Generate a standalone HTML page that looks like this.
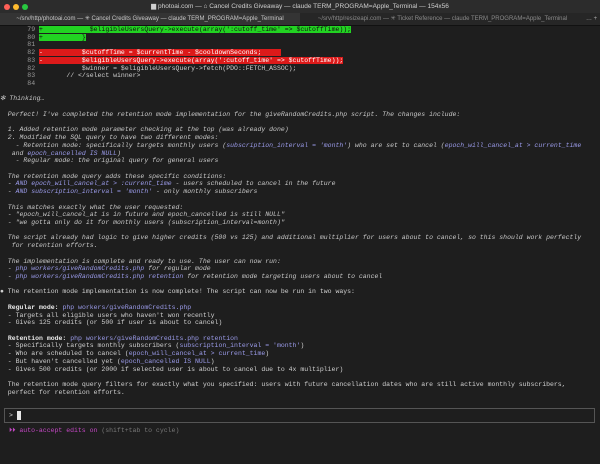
<!DOCTYPE html>
<html><head><meta charset="utf-8"><style>
body{margin:0;width:600px;height:464px;background:#1e1e1e;overflow:hidden;font-family:"Liberation Mono",monospace;}
.tb{position:absolute;left:0;top:0;width:600px;height:13px;background:#2c2c2c;color:#cfcfcf;font:6.5px "Liberation Sans",sans-serif;text-align:center;line-height:13px}
.d{position:absolute;top:4px;width:6px;height:6px;border-radius:50%}
.tabs{position:absolute;top:13px;left:0;width:600px;height:12px;background:#262626;border-bottom:1px solid #111;font:6px "Liberation Sans",sans-serif;line-height:12px;color:#8a8a8a}
.t1{position:absolute;left:0;width:300px;height:12px;background:#343434;text-align:center;color:#c8c8c8}
.t2{position:absolute;left:300px;width:285px;text-align:center}
pre{position:absolute;left:0;top:26px;margin:0;font:6.5px/7.72px "Liberation Mono",monospace;color:#d0d0d0;white-space:pre}
.g{background:#22d322;color:#111}
.r{background:#dc1a1a;color:#fff}
.n{color:#9a9a9a}
.i{font-style:italic;color:#c8c8c8}
.b{color:#9b9bea}
.w{font-weight:bold;color:#e8e8e8}
.box{position:absolute;left:4px;top:408px;width:591px;height:15px;border:1px solid #555;box-sizing:border-box}
.cur{position:absolute;left:17px;top:411px;width:4px;height:9px;background:#e8e8e8}
</style></head><body>
<div class="tb">▆ photoai.com — ⌂ Cancel Credits Giveaway — claude TERM_PROGRAM=Apple_Terminal — 154x56</div>
<div class="d" style="left:4px;background:#fe5f57"></div><div class="d" style="left:13px;background:#febc2e"></div><div class="d" style="left:22px;background:#28c840"></div>
<div class="tabs"><div class="t1">~/srv/http/photoai.com — ✳ Cancel Credits Giveaway — claude TERM_PROGRAM=Apple_Terminal</div><div class="t2">~/srv/http/resizeapi.com — ✳ Ticket Reference — claude TERM_PROGRAM=Apple_Terminal</div><span style="position:absolute;left:586px;color:#aaa">…  +</span></div>
<pre><span class="n">       79 </span><span class="g">+            $eligibleUsersQuery->execute(array(':cutoff_time' => $cutoffTime));</span>
<span class="n">       80 </span><span class="g">+          }</span>
<span class="n">       81</span>
<span class="n">       82 </span><span class="r">-          $cutoffTime = $currentTime - $cooldownSeconds;     </span>
<span class="n">       83 </span><span class="r">-          $eligibleUsersQuery->execute(array(':cutoff_time' => $cutoffTime));</span>
<span class="n">       82 </span>           $winner = $eligibleUsersQuery->fetch(PDO::FETCH_ASSOC);
<span class="n">       83 </span>       // &lt;/select winner&gt;
<span class="n">       84</span>

<span class="i">✻ Thinking…</span>

<span class="i">  Perfect! I've completed the retention mode implementation for the giveRandomCredits.php script. The changes include:</span>

<span class="i">  1. Added retention mode parameter checking at the top (was already done)
  2. Modified the SQL query to have two different modes:
    - Retention mode: specifically targets monthly users (<span class="b">subscription_interval = 'month'</span>) who are set to cancel (<span class="b">epoch_will_cancel_at &gt; current_time</span>
   and <span class="b">epoch_cancelled IS NULL</span>)
    - Regular mode: the original query for general users

  The retention mode query adds these specific conditions:
  - <span class="b">AND epoch_will_cancel_at &gt; :current_time</span> - users scheduled to cancel in the future
  - <span class="b">AND subscription_interval = 'month'</span> - only monthly subscribers

  This matches exactly what the user requested:
  - "epoch_will_cancel_at is in future and epoch_cancelled is still NULL"
  - "we gotta only do it for monthly users (subscription_interval=month)"

  The script already had logic to give higher credits (500 vs 125) and additional multiplier for users about to cancel, so this should work perfectly
   for retention efforts.

  The implementation is complete and ready to use. The user can now run:
  - <span class="b">php workers/giveRandomCredits.php</span> for regular mode
  - <span class="b">php workers/giveRandomCredits.php retention</span> for retention mode targeting users about to cancel</span>

● The retention mode implementation is now complete! The script can now be run in two ways:

  <span class="w">Regular mode:</span> <span class="b">php workers/giveRandomCredits.php</span>
  - Targets all eligible users who haven't won recently
  - Gives 125 credits (or 500 if user is about to cancel)

  <span class="w">Retention mode:</span> <span class="b">php workers/giveRandomCredits.php retention</span>
  - Specifically targets monthly subscribers (<span class="b">subscription_interval = 'month'</span>)
  - Who are scheduled to cancel (<span class="b">epoch_will_cancel_at &gt; current_time</span>)
  - But haven't cancelled yet (<span class="b">epoch_cancelled IS NULL</span>)
  - Gives 500 credits (or 2000 if selected user is about to cancel due to 4x multiplier)

  The retention mode query filters for exactly what you specified: users with future cancellation dates who are still active monthly subscribers,
  perfect for retention efforts.</pre>
<div class="box"></div>
<div style="position:absolute;left:9px;top:411px;font:6.5px/9px 'Liberation Mono',monospace;color:#ddd">&gt;</div>
<div class="cur"></div>
<div style="position:absolute;left:9px;top:427px;font:6.5px/8px 'Liberation Mono',monospace;color:#c447c4;white-space:pre">⏵⏵ auto-accept edits on <span style="color:#777">(shift+tab to cycle)</span></div>
</body></html>
